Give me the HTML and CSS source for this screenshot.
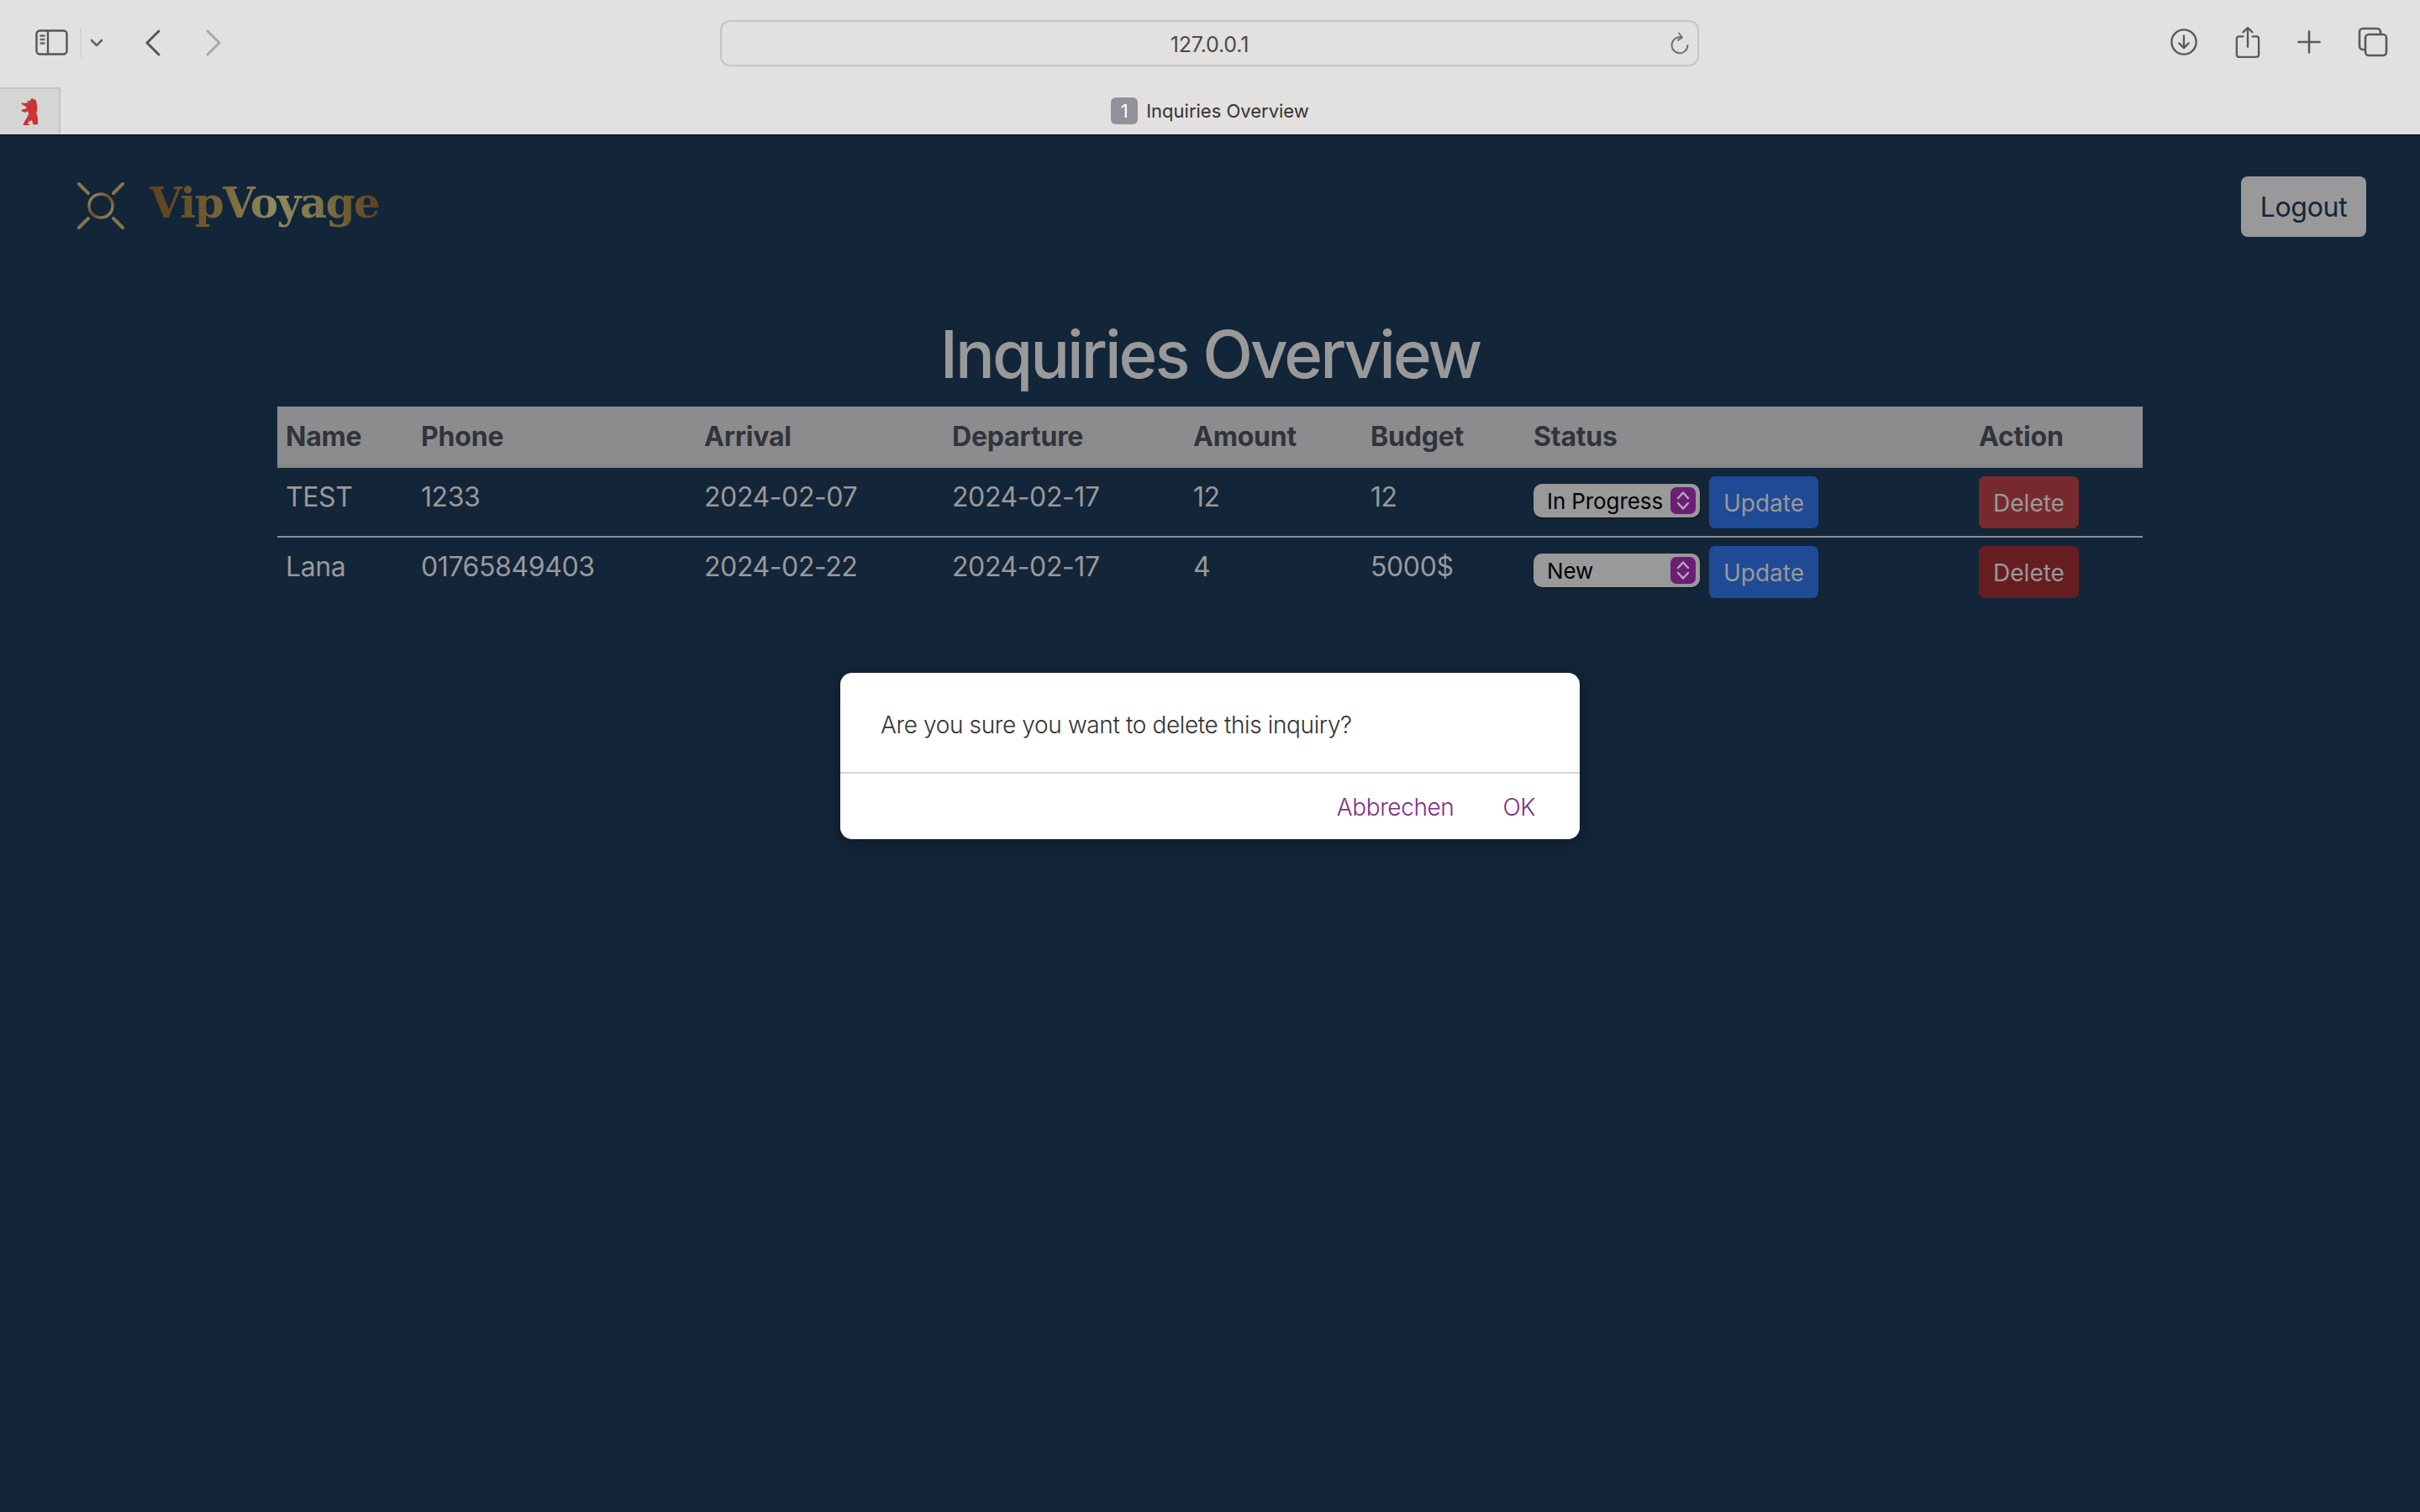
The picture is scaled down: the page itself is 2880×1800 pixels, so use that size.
FILE: index.html
```html
<!DOCTYPE html>
<html lang="en">
<head>
  <meta charset="UTF-8" />
  <title>Inquiries Overview</title>
  <link rel="stylesheet" href="styles.css">
</head>
<body>

<!-- Browser chrome -->
<div class="chrome">
  <div class="toolbar">
    <div class="tool-left">
      <svg class="ico-sidebar" width="40" height="32" viewBox="0 0 40 32" fill="none" stroke="#565654" stroke-width="2.4">
        <rect x="1.5" y="1.5" width="36" height="28" rx="4" />
        <path d="M15 1.5v28" />
        <path d="M5.5 7.5h6M5.5 12h6M5.5 16.500h6" stroke="#6a6a68" />
      </svg>
      <span class="tool-sep"></span>
      <svg class="ico-chevron" width="16" height="10" viewBox="0 0 16 10" fill="none" stroke="#656563" stroke-width="2.6" stroke-linecap="round" stroke-linejoin="round">
        <path d="M2 2l6 6 6-6" />
      </svg>
      <svg class="ico-back" width="20" height="32" viewBox="0 0 20 32" fill="none" stroke="#565654" stroke-width="3" stroke-linecap="round" stroke-linejoin="round">
        <path d="M17 2L3 16l14 14" />
      </svg>
      <svg class="ico-forward" width="20" height="32" viewBox="0 0 20 32" fill="none" stroke="#a8a8a6" stroke-width="3" stroke-linecap="round" stroke-linejoin="round">
        <path d="M3 2l14 14L3 30" />
      </svg>
    </div>
    <div class="url-bar">
      <span class="url-text">127.0.0.1</span>
      <svg class="ico-reload" width="24" height="28" viewBox="0 0 24 28" fill="none" stroke="#6a6a68" stroke-width="1.8" stroke-linecap="round" stroke-linejoin="round">
        <path d="M14 6.500A9.500 9.500 0 1 0 21.500 16" />
        <path d="M11 1.500L15 6.500l-5 3.500" />
      </svg>
    </div>
    <div class="tool-right">
      <svg width="34" height="34" viewBox="0 0 36 36" fill="none" stroke="#5a5a58" stroke-width="2.500" stroke-linecap="round" stroke-linejoin="round">
        <circle cx="18" cy="18" r="15.500" />
        <path d="M18 10v15M12 19.500l6 6 6-6" />
      </svg>
      <svg width="30" height="38" viewBox="0 0 32 40" fill="none" stroke="#5a5a58" stroke-width="2.500" stroke-linecap="round" stroke-linejoin="round">
        <path d="M10 13H5a3 3 0 0 0-3 3v20a3 3 0 0 0 3 3h22a3 3 0 0 0 3-3V16a3 3 0 0 0-3-3h-5" />
        <path d="M16 26V2M10 7.500L16 2l6 5.500" />
      </svg>
      <svg width="28" height="28" viewBox="0 0 28 28" fill="none" stroke="#5a5a58" stroke-width="2.600" stroke-linecap="round">
        <path d="M14 1.500v25M1.500 14h25" />
      </svg>
      <svg width="36" height="36" viewBox="0 0 36 36" fill="none" stroke="#5a5a58" stroke-width="2.600" stroke-linejoin="round">
        <path d="M27 8V6a4 4 0 0 0-4-4H6a4 4 0 0 0-4 4v17a4 4 0 0 0 4 4h2" />
        <rect x="9" y="9" width="25" height="25" rx="4" />
      </svg>
    </div>
  </div>
  <div class="tabbar">
    <div class="pinned-tab">
      <svg width="20" height="32" viewBox="45 22 60 96" fill="#cc3339">
        <path d="M83 22L92 26 98 28 102 45 103 60 100 75 104 88 106 105 105 116 88 116 84 100 74 105 68 112 78 118 52 118 58 104 66 92 72 78 70 68 60 73 46 68 50 62 60 60 66 54 48 44 46 38 60 40 68 36 74 38 66 30 78 30Z" />
      </svg>
    </div>
    <div class="tab-title">
      <span class="tab-count">1</span>
      <span>Inquiries Overview</span>
    </div>
  </div>
</div>

<!-- Page -->
<div class="page">
  <header class="page-header">
    <a class="logo" href="#">
      <svg width="58" height="58" viewBox="0 0 58 58" fill="none" stroke-linecap="round">
        <defs>
          <linearGradient id="gold" x1="0" y1="0" x2="1" y2="1">
            <stop offset="0" stop-color="#9a8f63" />
            <stop offset="0.5" stop-color="#6a4e26" />
            <stop offset="1" stop-color="#9a8f63" />
          </linearGradient>
        </defs>
        <circle cx="29" cy="29" r="14" stroke="url(#gold)" stroke-width="3.500" />
        <path d="M3 3l11 11M55 3L44 14M3 55l11-11M55 55L44 44" stroke="#85754d" stroke-width="4" />
      </svg>
      <span class="logo-text">VipVoyage</span>
    </a>
    <button class="logout-btn">Logout</button>
  </header>

  <h1>Inquiries Overview</h1>

  <table class="inquiry-table">
    <thead>
      <tr>
        <th class="col-name">Name</th>
        <th class="col-phone">Phone</th>
        <th class="col-arrival">Arrival</th>
        <th class="col-departure">Departure</th>
        <th class="col-amount">Amount</th>
        <th class="col-budget">Budget</th>
        <th class="col-status">Status</th>
        <th>Action</th>
      </tr>
    </thead>
    <tbody>
      <tr>
        <td>TEST</td>
        <td>1233</td>
        <td>2024-02-07</td>
        <td>2024-02-17</td>
        <td>12</td>
        <td>12</td>
        <td>
          <div class="status-form">
            <span class="select-wrap">
              <select class="status-select">
                <option>In Progress</option>
                <option>New</option>
              </select>
              <span class="select-arrows">
                <svg width="16" height="24" viewBox="0 0 16 24" fill="none" stroke="#b9a8bc" stroke-width="2.400" stroke-linecap="round" stroke-linejoin="round">
                  <path d="M2 9L8 2.500 14 9M2 15L8 21.500 14 15" />
                </svg>
              </span>
            </span>
            <button class="update-btn">Update</button>
          </div>
        </td>
        <td><button class="delete-btn hover">Delete</button></td>
      </tr>
      <tr>
        <td>Lana</td>
        <td>01765849403</td>
        <td>2024-02-22</td>
        <td>2024-02-17</td>
        <td>4</td>
        <td>5000$</td>
        <td>
          <div class="status-form">
            <span class="select-wrap">
              <select class="status-select">
                <option>New</option>
                <option>In Progress</option>
              </select>
              <span class="select-arrows">
                <svg width="16" height="24" viewBox="0 0 16 24" fill="none" stroke="#b9a8bc" stroke-width="2.400" stroke-linecap="round" stroke-linejoin="round">
                  <path d="M2 9L8 2.500 14 9M2 15L8 21.500 14 15" />
                </svg>
              </span>
            </span>
            <button class="update-btn">Update</button>
          </div>
        </td>
        <td><button class="delete-btn">Delete</button></td>
      </tr>
    </tbody>
  </table>

  <!-- Confirm dialog -->
  <div class="dialog">
    <p class="dialog-msg">Are you sure you want to delete this inquiry?</p>
    <div class="dialog-actions">
      <button class="dialog-btn">Abbrechen</button>
      <button class="dialog-btn">OK</button>
    </div>
  </div>
</div>

</body>
</html>
```

FILE: styles.css
```css
* {
  box-sizing: border-box;
}

body {
  margin: 0;
  width: 2880px;
  height: 1800px;
  overflow: hidden;
  display: flex;
  flex-direction: column;
  font-family: Inter, 'Liberation Sans', sans-serif;
  background: #132539;
}

/* Browser chrome */
.chrome {
  height: 161px;
  flex-shrink: 0;
  background: #e2e1df;
  border-bottom: 1px solid #05080d;
}

.toolbar {
  height: 104px;
  display: grid;
  grid-template-columns: 857px 1165px 1fr;
  align-items: start;
}

.tool-left {
  display: flex;
  align-items: center;
  padding: 33px 0 0 42px;
}

.ico-sidebar {
  display: block;
}

.tool-sep {
  width: 2px;
  height: 36px;
  margin-left: 13px;
  background: #d3d2d0;
}

.ico-chevron {
  margin-left: 10px;
}

.ico-back {
  margin-left: 49px;
}

.ico-forward {
  margin-left: 52px;
}

.url-bar {
  position: relative;
  height: 55px;
  margin-top: 24px;
  padding-top: 2px;
  border: 2px solid #c6c5c3;
  border-radius: 12px;
  display: flex;
  align-items: center;
  justify-content: center;
}

.url-text {
  font-size: 25px;
  letter-spacing: -0.2px;
  color: #4a4a48;
}

.ico-reload {
  position: absolute;
  right: 9px;
  top: 12px;
}

.tool-right {
  display: flex;
  justify-content: flex-end;
  align-items: center;
  gap: 44px;
  padding: 31px 38px 0 0;
}

.tabbar {
  height: 56px;
  position: relative;
  display: flex;
  align-items: center;
  justify-content: center;
}

.pinned-tab {
  position: absolute;
  left: 0;
  top: 0;
  width: 72px;
  height: 56px;
  background: #d5d5d3;
  border-top: 2px solid #c4c4c2;
  border-right: 2px solid #c4c4c2;
  display: flex;
  align-items: center;
  justify-content: center;
}

.tab-title {
  display: flex;
  align-items: center;
  gap: 10px;
  font-size: 22px;
  color: #333;
}

.tab-count {
  width: 32px;
  height: 32px;
  border-radius: 6px;
  background: #92929c;
  color: #fff;
  font-size: 22px;
  text-align: center;
  line-height: 32px;
}

/* Page */
.page {
  position: relative;
  flex: 1;
  background: #132539;
}

.page-header {
  height: 162px;
  display: flex;
  justify-content: space-between;
  padding: 49px 64px 0 91px;
}

.logo {
  display: flex;
  align-items: flex-start;
  gap: 29px;
  height: 58px;
  margin-top: 6px;
  text-decoration: none;
}

.logo-text {
  margin-top: -9px;
  font-family: 'DejaVu Serif', serif;
  font-weight: 700;
  font-size: 50px;
  letter-spacing: -1.600px;
  line-height: 70px;
  background: linear-gradient(90deg, #5c421e 0%, #6f5a30 25%, #8e8b63 55%, #7d7248 75%, #5b401c 100%);
  -webkit-background-clip: text;
  background-clip: text;
  color: transparent;
}

.logout-btn {
  height: 72px;
  width: 149px;
  border: none;
  border-radius: 8px;
  background: #999;
  color: #132539;
  font-family: inherit;
  font-size: 32px;
  letter-spacing: -0.3px;
}

h1 {
  margin: 0 0 14px;
  padding-top: 50px;
  text-align: center;
  font-size: 78px;
  font-weight: 500;
  letter-spacing: -3px;
  line-height: 97px;
  color: #999;
}

.inquiry-table {
  width: 2220px;
  margin-left: 330px;
  border-collapse: collapse;
  table-layout: fixed;
  font-size: 32px;
  line-height: 48px;
  color: #999;
}

.inquiry-table th {
  padding: 12px 10px 9px;
  border-bottom: 4px solid #858585;
  background: #8c8c8e;
  color: #30343b;
  font-weight: 700;
  letter-spacing: -0.2px;
  text-align: left;
}

.inquiry-table td {
  padding: 10px 10px 9px;
  vertical-align: top;
  line-height: 50px;
  letter-spacing: -0.4px;
}

.inquiry-table tbody tr:first-child td {
  border-bottom: 2px solid #8a8d92;
}

.col-name { width: 161px; }
.col-phone { width: 337px; }
.col-arrival { width: 295px; }
.col-departure { width: 287px; }
.col-amount { width: 211px; }
.col-budget { width: 194px; }
.col-status { width: 530px; }

.status-form {
  display: flex;
  align-items: center;
  gap: 11px;
}

.select-wrap {
  position: relative;
  display: block;
  width: 198px;
  height: 40px;
  margin-bottom: 4px;
}

.status-select {
  display: block;
  width: 100%;
  height: 100%;
  appearance: none;
  -webkit-appearance: none;
  border: none;
  border-radius: 10px;
  padding: 0 0 0 16px;
  background: #999;
  box-shadow: 0 1px 2px rgba(0, 0, 0, 0.4);
  color: #000;
  font-family: inherit;
  font-size: 26px;
  letter-spacing: -0.1px;
}

.select-arrows {
  position: absolute;
  right: 5px;
  top: 4px;
  width: 30px;
  height: 32px;
  border-radius: 7px;
  background: #6b1f74;
  display: flex;
  align-items: center;
  justify-content: center;
}

.update-btn, .delete-btn {
  display: block;
  height: 62px;
  border: none;
  border-radius: 7px;
  padding-top: 2px;
  color: #999;
  font-family: inherit;
  font-size: 28px;
}

.update-btn {
  width: 130px;
  background: #1f4a95;
}

.delete-btn {
  width: 119px;
  background: #661d20;
}

.delete-btn.hover {
  background: #772a2e;
}

/* Confirm dialog */
.dialog {
  position: absolute;
  left: 1000px;
  top: 640px;
  width: 880px;
  height: 198px;
  background: #fff;
  border-radius: 14px;
  box-shadow: 0 4px 24px rgba(0, 0, 0, 0.3);
  overflow: hidden;
}

.dialog-msg {
  margin: 0;
  height: 120px;
  padding-left: 48px;
  border-bottom: 2px solid #d4d4d4;
  font-size: 28px;
  font-weight: 300;
  letter-spacing: -0.37px;
  line-height: 124px;
  color: #333;
}

.dialog-actions {
  display: flex;
  justify-content: flex-end;
  gap: 58px;
  padding: 0 53px 0 0;
}

.dialog-btn {
  height: 80px;
  border: none;
  padding: 0;
  background: none;
  color: #7e2f88;
  font-family: inherit;
  font-size: 28px;
  font-weight: 300;
  letter-spacing: -0.4px;
}
```
